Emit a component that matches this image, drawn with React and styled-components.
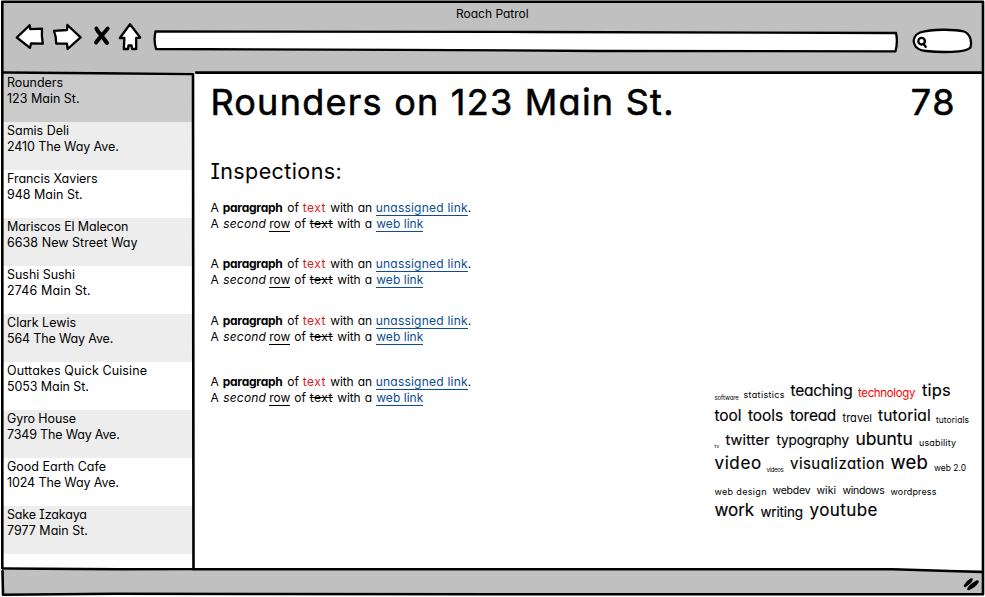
import React from 'react';
import styled, { createGlobalStyle } from 'styled-components';

const GlobalStyle = createGlobalStyle`
  * { box-sizing: border-box; }
  body {
    margin: 0;
    background: #fff;
    color: #000;
    font-family: Inter, sans-serif;
    font-feature-settings: "cv11" 1, "cv08" 1;
  }
`;

const Window = styled.div`
  width: 985px;
  height: 597px;
  padding: 1px 1px 1px 2px;
  position: relative;
  display: flex;
  flex-direction: column;
  overflow: hidden;
`;

const Header = styled.header`
  height: 71px;
  width: 981px;
  background: #c0c0c0;
  display: flex;
  flex-direction: column;
`;

const TitleText = styled.div`
  height: 21px;
  padding: 5px 0 0 454px;
  font-size: 12px;
  line-height: 15px;
  letter-spacing: 0;
  white-space: nowrap;
`;

const Toolbar = styled.div`
  display: flex;
  height: 34px;
  padding-left: 10px;
`;

const Sketch = styled.svg`
  display: block;
  flex: none;
  fill: #fff;
  stroke: #000;
  stroke-width: ${(p) => p.$stroke || 2.3};
  stroke-linejoin: round;
  stroke-linecap: round;
`;

const Body = styled.div`
  height: 498px;
  width: 981px;
  display: flex;
`;

const Sidebar = styled.aside`
  width: 191px;
  padding-top: 2px;
  flex: none;
`;

const Row = styled.div`
  height: 48px;
  padding: 1px 0 0 5px;
  background: ${(p) => p.$bg};
  font-size: 12.5px;
  line-height: 16px;
`;

const Line = styled.div`
  white-space: nowrap;
  letter-spacing: ${(p) => p.$ls}px;
`;

const Main = styled.main`
  flex: 1;
  display: flex;
  flex-direction: column;
  padding: 8px 27px 0 17.4px;
`;

const Heading = styled.div`
  display: flex;
  justify-content: space-between;
  height: 44px;
`;

const Title = styled.h1`
  margin: 0;
  font-size: 36px;
  line-height: 44px;
  font-weight: 400;
  white-space: nowrap;
  letter-spacing: ${(p) => p.$ls}px;
  -webkit-text-stroke: 0.6px currentColor;
`;

const SubTitle = styled.h2`
  margin: 31px 0 0;
  font-size: 21.5px;
  line-height: 32px;
  font-weight: 400;
  letter-spacing: 0.4px;
  height: 45px;
`;

const Columns = styled.div`
  display: flex;
  justify-content: space-between;
`;

const Inspection = styled.div`
  height: ${(p) => p.$h}px;
  font-size: 12px;
  line-height: 16px;
`;

const TextLine = styled.div`
  display: flex;
  height: 16px;
`;

const Word = styled.span`
  width: ${(p) => p.$w}px;
  flex: none;
  white-space: nowrap;
  letter-spacing: ${(p) => p.$ls || 0}px;
`;
const Bold = styled.b`font-weight: 700;`;
const Red = styled.span`color: #d2231f;`;
const Under = styled.span`
  display: inline-block;
  height: 16px;
  border-bottom: 1px solid currentColor;
`;
const Link = styled(Under)`color: #0b4c93;`;

const Cloud = styled.div`
  width: 262px;
  margin: 177px -20.5px 0 0;
  display: flex;
  flex-direction: column;
`;

const TagRow = styled.div`
  height: ${(p) => p.$h}px;
  display: flex;
  align-items: flex-end;
`;

const Tag = styled.span`
  width: ${(p) => p.$w}px;
  flex: none;
  white-space: nowrap;
  line-height: 1.2;
  font-size: ${(p) => p.$s}px;
  letter-spacing: ${(p) => p.$ls}px;
  color: ${(p) => p.$c || '#000'};
  -webkit-text-stroke: ${(p) => (p.$s > 13 ? 0.15 : 0)}px currentColor;
`;

const Footer = styled.footer`
  height: 25px;
  width: 981px;
  background: #c0c0c0;
`;

const Frame = styled.svg`
  position: absolute;
  inset: 0;
  fill: none;
  stroke: #000;
  stroke-width: 2.6;
  stroke-linecap: round;
  stroke-linejoin: round;
  pointer-events: none;
`;

const places = [
  ['Rounders', -0.05, '123 Main St.', 0],
  ['Samis Deli', -0.02, '2410 The Way Ave.', -0.1],
  ['Francis Xaviers', -0.05, '948 Main St.', 0],
  ['Mariscos El Malecon', -0.12, '6638 New Street Way', 0.04],
  ['Sushi Sushi', -0.04, '2746 Main St.', 0.15],
  ['Clark Lewis', 0, '564 The Way Ave.', -0.15],
  ['Outtakes Quick Cuisine', 0.11, '5053 Main St.', -0.09],
  ['Gyro House', -0.1, '7349 The Way Ave.', -0.17],
  ['Good Earth Cafe', 0.01, '1024 The Way Ave.', -0.1],
  ['Sake Izakaya', -0.15, '7977 Main St.', 0],
];

const rowColor = (i) => (i === 0 ? '#cbcbcb' : i % 2 ? '#ededed' : '#fff');

// text, advance to the next tag, font size, letter spacing, colour
const tags = [
  { h: 24, items: [['software', 29, 6, -0.1], ['statistics', 47, 9, 0.33], ['teaching', 67.5, 15.5, -0.25], ['technology', 64, 11.5, -0.36, '#f00'], ['tips', 30, 16.5, 0.2]] },
  { h: 24.5, items: [['tool', 33.5, 15.5, -0.05], ['tools', 42, 15.5, -0.05], ['toread', 52.5, 15.5, -0.3], ['travel', 35.5, 11, 0.03], ['tutorial', 58, 15.5, 0.18], ['tutorials', 34, 8.5, 0.03]] },
  { h: 23, items: [['tv', 11, 5, 0.3], ['twitter', 51, 14.5, 0.13], ['typography', 79, 13.5, -0.12], ['ubuntu', 63.5, 17.5, -0.1], ['usability', 40, 9, 0.15]] },
  { h: 24.5, items: [['video', 52, 17, 0.6], ['videos', 23.5, 6, -0.3], ['visualization', 100.5, 15, 0.45], ['web', 43.5, 18.5, 0.2], ['web 2.0', 34, 8.5, 0]] },
  { h: 24.5, items: [['web design', 58, 9, 0.33], ['webdev', 44, 10.5, -0.2], ['wiki', 26, 10.5, 0], ['windows', 48, 10.5, -0.3], ['wordpress', 50, 9, 0.14]] },
  { h: 22.5, items: [['work', 46, 17, -0.05], ['writing', 49, 13.5, -0.18], ['youtube', 70, 17, 0.42]] },
];

function Paragraph({ height }) {
  return (
    <Inspection $h={height}>
      <TextLine>
        <Word $w={12.3}>A</Word>
        <Word $w={64.5} $ls={-0.25}><Bold>paragraph</Bold></Word>
        <Word $w={15.5}>of</Word>
        <Word $w={27.5} $ls={0.5}><Red>text</Red></Word>
        <Word $w={27.5} $ls={-0.1}>with</Word>
        <Word $w={18}>an</Word>
        <Word $w={92} $ls={0.22}><Link>unassigned link</Link></Word>
        <Word $w={4}>.</Word>
      </TextLine>
      <TextLine>
        <Word $w={12.8}>A</Word>
        <Word $w={46} $ls={0.2}><i>second</i></Word>
        <Word $w={25}><Under>row</Under></Word>
        <Word $w={15.5}>of</Word>
        <Word $w={27.5} $ls={0.5}><s>text</s></Word>
        <Word $w={27.5} $ls={-0.1}>with</Word>
        <Word $w={11.5}>a</Word>
        <Word $w={48} $ls={0.05}><Link>web link</Link></Word>
      </TextLine>
    </Inspection>
  );
}

export default function App() {
  return (
    <>
      <GlobalStyle />
      <Window>
        <Header>
          <TitleText>Roach Patrol</TitleText>
          <Toolbar>
            <Sketch width="36" height="34" viewBox="12 22 36 34">
              <path d="M16.8 37.5 L29.8 25.2 L30.2 29.2 L42 28.6 Q41.4 36 42.8 43.6 L31 43.4 L30 47.8 Z" />
            </Sketch>
            <Sketch width="38" height="34" viewBox="48 22 38 34">
              <path d="M54 30.8 L67 30 L67.4 25 L80.6 37.4 L67.6 49 L67 43.6 L56.2 43.6 Q56.4 37 54 30.8 Z" />
            </Sketch>
            <Sketch width="28" height="34" viewBox="86 22 28 34" $stroke={4}>
              <path d="M96.4 28.6 Q98 32 101.5 35.5 L107 43 M107.6 28.6 Q105 32 101.5 35.5 L96 42.5" />
            </Sketch>
            <Sketch width="38" height="34" viewBox="114 22 38 34">
              <path d="M130 24.2 L119.8 38 L124.4 38 L123.8 49 L128 49 L128.5 45.5 L131.5 45.5 L132.2 49 L136.2 49 L136.2 38 L140.2 37.5 Z" />
            </Sketch>
            <Sketch width="752" height="34" viewBox="152 22 752 34">
              <path d="M155.5 31.5 L535 32 L896 33 Q898 42 895.5 51.3 L600 51 L400 49.8 L156 49 Q153.5 40 155.5 31.5 Z" />
            </Sketch>
            <Sketch width="72" height="34" viewBox="904 22 72 34">
              <path d="M926 51 C912 50 910 37 920 32.5 C932 29 954 29 964 31.5 C971 34 972 43 970.5 47.5 C966 53 940 52.5 926 51 Z" />
              <circle cx="921.6" cy="41.2" r="3.3" />
              <path d="M923.5 44 L925.7 46.8" />
            </Sketch>
          </Toolbar>
        </Header>
        <Body>
          <Sidebar>
            {places.map(([name, a, address, b], i) => (
              <Row key={name} $bg={rowColor(i)}>
                <Line $ls={a}>{name}</Line>
                <Line $ls={b}>{address}</Line>
              </Row>
            ))}
          </Sidebar>
          <Main>
            <Heading>
              <Title $ls={1.25}>Rounders on 123 Main St.</Title>
              <Title $ls={1.5}>78</Title>
            </Heading>
            <SubTitle>Inspections:</SubTitle>
            <Columns>
              <div>
                <Paragraph height={56} />
                <Paragraph height={57} />
                <Paragraph height={61} />
                <Paragraph height={32} />
              </div>
              <Cloud>
                {tags.map((row, i) => (
                  <TagRow key={i} $h={row.h}>
                    {row.items.map(([text, w, s, ls, c]) => (
                      <Tag key={text} $w={w} $s={s} $ls={ls} $c={c}>{text}</Tag>
                    ))}
                  </TagRow>
                ))}
              </Cloud>
            </Columns>
          </Main>
        </Body>
        <Footer />
        <Frame width="985" height="597" viewBox="0 0 985 597">
          <path d="M2.3 1.8 L983 1.8 L983 300 L983 594.3 L500 594.3 L115 593.8 L3 594.8 L2.5 571 M2.3 568 L2.3 1.8" />
          <path d="M3 72.5 L193 74 L193.5 569 L120 569.3 L3 568.5" />
          <path d="M196 72.6 L982 72.6 M193.5 569.2 L893 569.2 L982 572" />
          <path d="M965 585.8 Q967 582 971.5 579.5 Q970 583 965 585.8 Z M968.5 589 Q971 584.5 977.5 581.5 Q975 586 968.5 589 Z" fill="#000" />
        </Frame>
      </Window>
    </>
  );
}
